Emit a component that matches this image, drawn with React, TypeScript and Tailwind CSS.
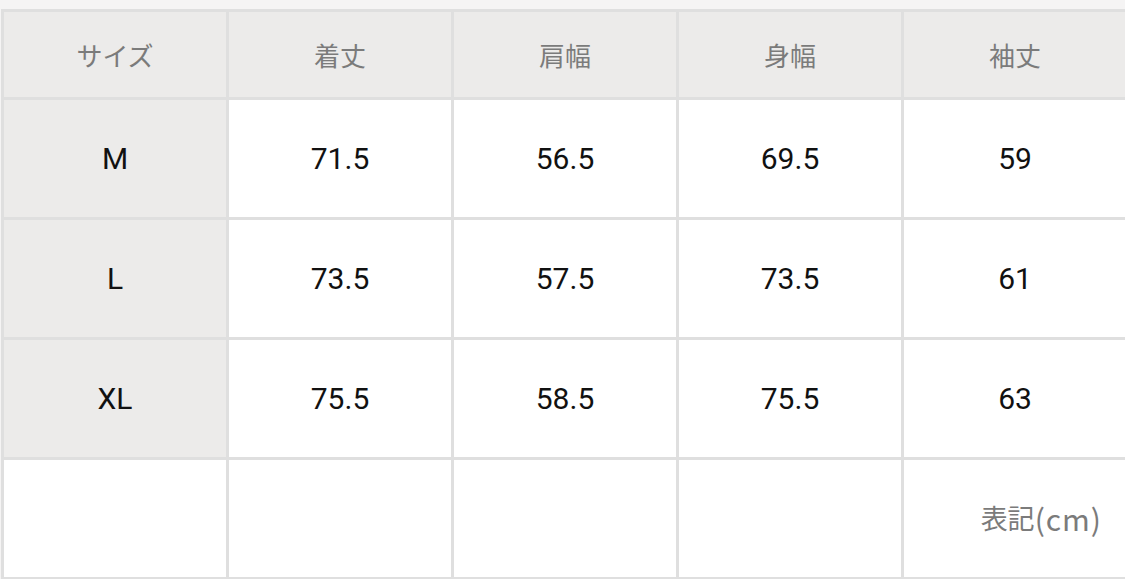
import React from "react";

const headers = ["サイズ", "着丈", "肩幅", "身幅", "袖丈"];
const rows = [
  ["M", "71.5", "56.5", "69.5", "59"],
  ["L", "73.5", "57.5", "73.5", "61"],
  ["XL", "75.5", "58.5", "75.5", "63"],
];

const jp = { fontFamily: '"Noto Sans CJK JP", "Noto Sans", sans-serif' };
const num = { fontFamily: 'Roboto, "Noto Sans CJK JP", sans-serif' };

export default function App() {
  return (
    <div className="w-[1125px] h-[579px] overflow-hidden bg-[#f5f4f4] pt-[9px] pl-[1px]">
      <div className="grid w-[1128px] grid-cols-[repeat(5,222px)] grid-rows-[85px_117px_117px_117px_117px] gap-[3px] bg-[#dfdfdf] p-[3px]">
        {headers.map((h) => (
          <div
            key={h}
            style={jp}
            className="flex items-center justify-center bg-[#ecebea] text-[26px] text-[#7b7b7b]"
          >
            {h}
          </div>
        ))}
        {rows.map((r) =>
          r.map((c, i) => (
            <div
              key={r[0] + i}
              style={num}
              className={`flex items-center justify-center text-[30px] text-[#111] ${
                i === 0 ? "bg-[#ecebea]" : "bg-white"
              }`}
            >
              {c}
            </div>
          ))
        )}
        <div className="bg-white" />
        <div className="bg-white" />
        <div className="bg-white" />
        <div className="bg-white" />
        <div
          style={jp}
          className="flex items-center justify-end bg-white pr-[24px] text-[27px] text-[#7b7b7b]"
        >
          <span>表記</span>
          <span className="tracking-[1px] text-[30px]">(cm)</span>
        </div>
      </div>
    </div>
  );
}
